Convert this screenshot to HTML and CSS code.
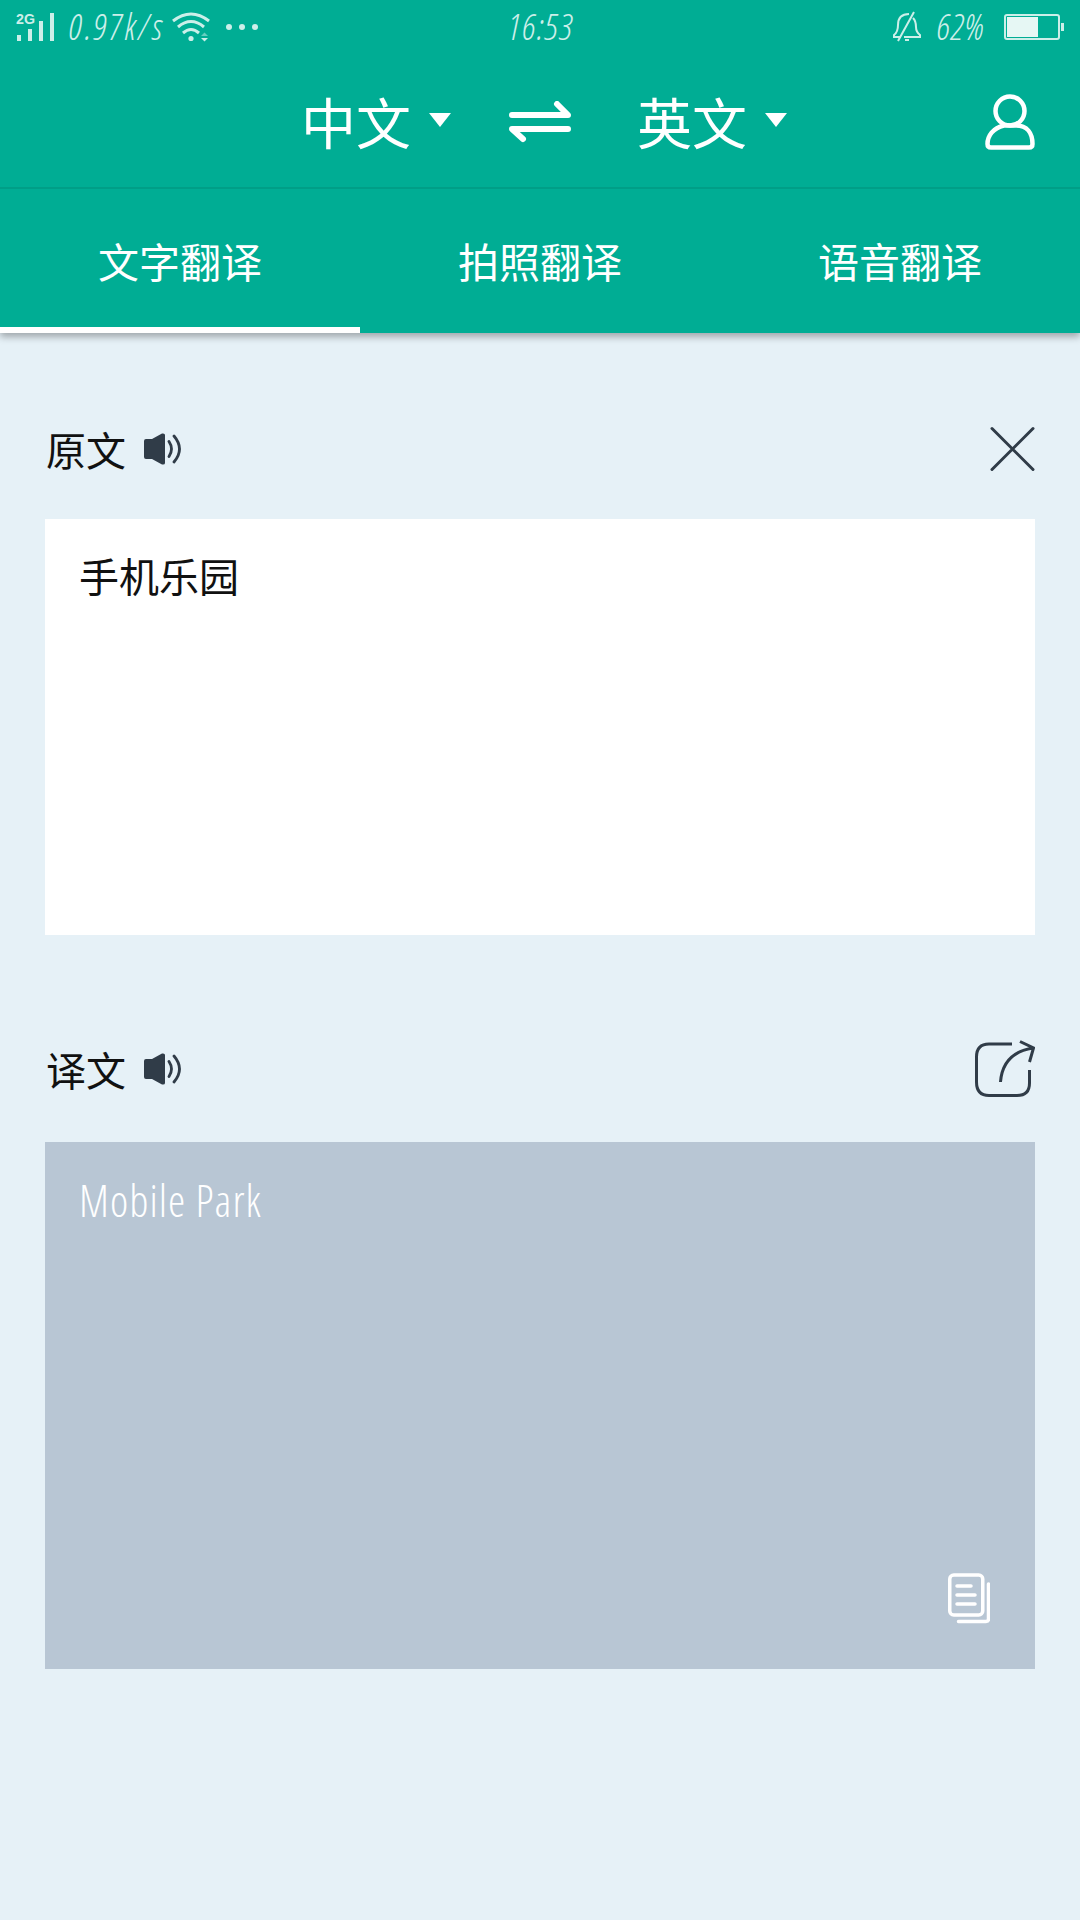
FILE: index.html
```
<!DOCTYPE html>
<html lang="zh-CN">
<head>
    <meta charset="UTF-8">
    <meta name="viewport" content="width=device-width, initial-scale=1.0">
    <title>翻译</title>
    <link rel="stylesheet" href="styles.css">
</head>
<body>
    <header class="header">
        <div class="status-bar">
            <div class="status-left">
                <svg class="signal" width="38" height="30" viewBox="0 0 38 30">
                    <text class="signal-text" x="0" y="11.500" textLength="19" lengthAdjust="spacingAndGlyphs">2G</text>
                    <rect x="1" y="23" width="4" height="6"/>
                    <rect x="12" y="17" width="4" height="12"/>
                    <rect x="23" y="9" width="4" height="20"/>
                    <rect x="34" y="1" width="4" height="28"/>
                </svg>
                <span class="speed">0.97k/s</span>
                <svg class="wifi" width="38" height="30" viewBox="0 0 38 30">
                    <g fill="none" stroke="currentColor" stroke-width="3">
                        <path d="M1 9Q19 -5 37 9"/>
                        <path d="M6 15Q19 4 32 15"/>
                        <path d="M11 21Q19 14 27 21"/>
                    </g>
                    <circle cx="19" cy="26.5" r="2.6"/>
                    <path d="M29 24l3.500-3.500 3.500 3.500z" opacity=".5"/>
                    <path d="M29 26h7l-3.500 3.500z"/>
                </svg>
                <svg class="dots" width="34" height="8" viewBox="0 0 34 8">
                    <circle cx="4" cy="4" r="3"/><circle cx="17" cy="4" r="3"/><circle cx="30" cy="4" r="3"/>
                </svg>
            </div>
            <span class="time">16:53</span>
            <div class="status-right">
                <svg class="bell" width="30" height="32" viewBox="0 0 30 32" fill="none" stroke="currentColor" stroke-width="2">
                    <path d="M9 26H2V24Q6 21 6 14C6 6 10 3 17 3M21 7Q24 10 24 16Q24 21 28 24V26H12M22 1L6 30"/>
                    <path d="M13 29h4"/>
                </svg>
                <span class="percent">62%</span>
                <svg class="battery" width="60" height="26" viewBox="0 0 60 26">
                    <rect x="1" y="1" width="54" height="24" rx="2" fill="none" stroke="currentColor" stroke-width="2"/>
                    <rect x="3" y="3" width="31" height="20" fill="#e6f7f4"/>
                    <rect x="57" y="9" width="3" height="8"/>
                </svg>
            </div>
        </div>

        <div class="title-bar">
            <button class="lang">中文<span class="caret"></span></button>
            <svg class="swap" width="62" height="42" viewBox="0 0 62 42" fill="none" stroke="#fff" stroke-width="6" stroke-linecap="round" stroke-linejoin="round">
                <path d="M3 14H59L48 3M59 28H3L14 38"/>
            </svg>
            <button class="lang">英文<span class="caret"></span></button>
            <svg class="user" width="50" height="56" viewBox="0 0 50 56" fill="none" stroke="#fff" stroke-width="4.500">
                <ellipse cx="25" cy="17" rx="14.500" ry="14.500"/>
                <path d="M19 31.500C8 34 2.500 42 2.500 50Q2.500 53.500 6 53.500H44Q47.500 53.500 47.500 50C47.500 39 42 31.500 31 31.500Z"/>
            </svg>
        </div>

        <nav class="tabs">
            <a class="tab active">文字翻译</a>
            <a class="tab">拍照翻译</a>
            <a class="tab">语音翻译</a>
        </nav>
    </header>

    <main class="content">
        <div class="section-head">
            <h2>原文</h2>
            <svg class="speaker" width="38" height="32" viewBox="0 0 38 32">
                <path d="M2 6H8L18 .5Q21 0 21 2V30Q21 32 18 31.500L8 26H2Q0 26 0 24V8Q0 6 2 6Z"/>
                <path d="M25 8.500Q30 16 25 23.500M30 3Q41 16 30 29" fill="none" stroke="currentColor" stroke-width="2.800" stroke-linecap="round"/>
            </svg>
            <svg class="close" width="46" height="46" viewBox="0 0 46 46" fill="none" stroke="currentColor" stroke-width="3" stroke-linecap="round">
                <path d="M3 2.500L44 43.500M44 2.500L3 43.500"/>
            </svg>
        </div>
        <div class="box source">手机乐园</div>

        <div class="section-head second">
            <h2>译文</h2>
            <svg class="speaker" width="38" height="32" viewBox="0 0 38 32">
                <path d="M2 6H8L18 .5Q21 0 21 2V30Q21 32 18 31.500L8 26H2Q0 26 0 24V8Q0 6 2 6Z"/>
                <path d="M25 8.500Q30 16 25 23.500M30 3Q41 16 30 29" fill="none" stroke="currentColor" stroke-width="2.800" stroke-linecap="round"/>
            </svg>
            <svg class="share" width="60" height="58" viewBox="0 0 60 58" fill="none" stroke="currentColor" stroke-width="3">
                <path d="M37 4H14Q1.500 4 1.500 17V42Q1.500 55.500 14 55.500H42Q54.500 55.500 54.500 43V30"/>
                <path d="M25.500 42C27 22 39 11 58 8M45 1.500L58.500 8L54.500 22"/>
            </svg>
        </div>
        <div class="box result">
            <p>Mobile Park</p>
            <svg class="copy" width="42" height="52" viewBox="0 0 42 52" fill="none" stroke="#fff" stroke-width="3.500" stroke-linecap="round">
                <rect x="1.750" y="2" width="33" height="40" rx="4"/>
                <path d="M9 13H23M9 22H27M9 31H27M10.500 48.500H38Q40.500 48.500 40.500 46V11"/>
            </svg>
        </div>
    </main>
</body>
</html>
```
FILE: styles.css
```
* {
    box-sizing: border-box;
    margin: 0;
    padding: 0;
}

body {
    font-family: "Noto Sans CJK SC", sans-serif;
    background-color: #e6f1f7;
    min-height: 100vh;
}

svg {
    display: block;
    flex: none;
}

.header {
    background-color: #00ad94;
    color: #fff;
    height: 333px;
    box-shadow: 0 4px 7px rgba(0, 0, 0, 0.3);
}

/* status bar */
.status-bar {
    display: grid;
    grid-template-columns: 1fr auto 1fr;
    align-items: center;
    height: 54px;
    padding: 0 16px;
    color: #ccefe9;
    fill: #ccefe9;
    font-family: "Open Sans Condensed Light", "Open Sans Condensed", "Open Sans", sans-serif;
    font-size: 36px;
    font-weight: 300;
    font-style: italic;
    line-height: 54px;
}

.status-left,
.status-right {
    display: flex;
    align-items: center;
}

.status-right {
    justify-content: flex-end;
}

.signal {
    overflow: visible;
}

.signal-text {
    font: bold 14px "Liberation Sans", sans-serif;
}

.speed {
    width: 98px;
    margin-left: 14px;
    letter-spacing: 2.5px;
    white-space: nowrap;
}

.wifi {
    margin-left: 6px;
}

.dots {
    margin-left: 15px;
}

.time {
    letter-spacing: 1.5px;
}

.percent {
    width: 50px;
    margin: 0 18px 0 14px;
    letter-spacing: 1px;
}

/* languages */
.title-bar {
    display: flex;
    align-items: center;
    height: 135px;
    padding: 2px 45px 0 301px;
    border-bottom: 2px solid #009e87;
}

.lang {
    display: flex;
    align-items: center;
    gap: 18px;
    padding-bottom: 3px;
    border: none;
    background: none;
    color: #fff;
    font-family: inherit;
    font-size: 55px;
    line-height: 80px;
}

.caret {
    border: 11px solid transparent;
    border-top: 14px solid #fff;
    border-bottom: none;
}

.swap {
    margin: 0 66px 0 58px;
}

.user {
    margin-left: auto;
}

/* tabs */
.tabs {
    display: grid;
    grid-template-columns: repeat(3, 1fr);
    height: 144px;
}

.tab {
    height: 144px;
    padding-top: 5px;
    border-bottom: 6px solid transparent;
    text-align: center;
    font-size: 41px;
    line-height: 133px;
}

.tab.active {
    border-bottom-color: #fff;
}

/* content */
.content {
    padding: 82px 45px 0;
}

.section-head {
    display: flex;
    align-items: center;
    height: 68px;
    color: #303c48;
}

.section-head h2 {
    padding-left: 1px;
    color: #111;
    font-size: 40px;
    font-weight: 400;
    line-height: 68px;
}

.speaker {
    margin-left: 18px;
    fill: #303c48;
}

.close,
.share {
    margin-left: auto;
}

.box {
    padding: 26px 34px;
    font-size: 40px;
    line-height: 60px;
}

.source {
    height: 416px;
    margin-top: 36px;
    background-color: #fff;
    color: #111;
}

.second {
    margin-top: 100px;
}

.result {
    display: flex;
    flex-direction: column;
    justify-content: space-between;
    height: 527px;
    margin-top: 39px;
    padding-top: 28px;
    padding-bottom: 44px;
    background-color: #b8c6d4;
    color: #fff;
    font-family: "Open Sans Condensed Light", "Open Sans Condensed", "Open Sans", sans-serif;
    font-size: 44px;
    font-weight: 300;
    letter-spacing: 1px;
}

.copy {
    align-self: flex-end;
    margin-right: 11px;
}
```
